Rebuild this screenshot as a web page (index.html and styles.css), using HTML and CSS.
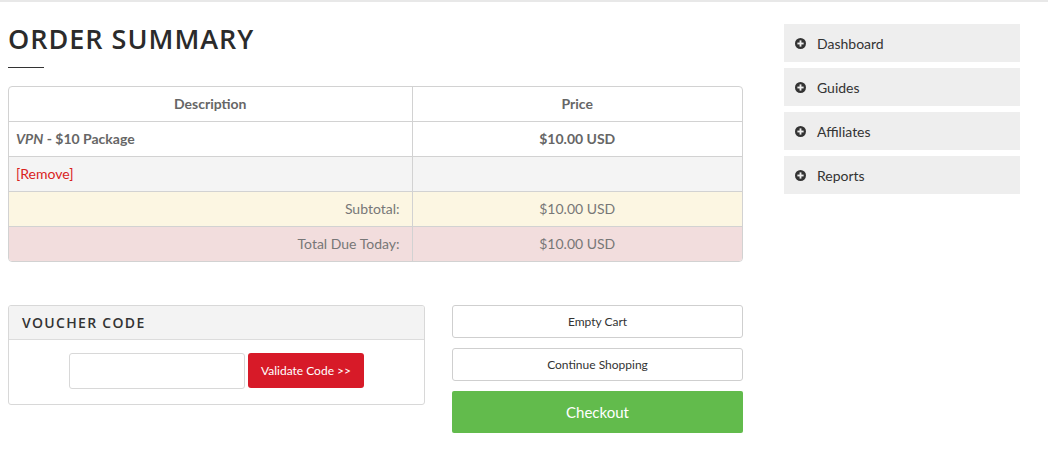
FILE: index.html
```html
<!DOCTYPE html>
<html>
<head>
<meta charset="utf-8">
<link rel="stylesheet" href="styles.css">
</head>
<body>
<div class="page">
  <main class="main">
    <h1 class="title">ORDER SUMMARY</h1>
    <div class="title-rule"></div>
    <div class="table-wrap">
      <table class="cart">
        <thead>
          <tr><th class="c-desc">Description</th><th class="c-price">Price</th></tr>
        </thead>
        <tbody>
          <tr class="r-item"><td><em>VPN</em> - $10 Package</td><td class="center">$10.00 USD</td></tr>
          <tr class="r-remove"><td><a class="remove" href="#">[Remove]</a></td><td></td></tr>
          <tr class="r-sub"><td class="right">Subtotal:</td><td class="center">$10.00 USD</td></tr>
          <tr class="r-total"><td class="right">Total Due Today:</td><td class="center">$10.00 USD</td></tr>
        </tbody>
      </table>
    </div>
    <div class="lower">
      <section class="voucher">
        <div class="voucher-head">VOUCHER CODE</div>
        <div class="voucher-body">
          <input class="voucher-input" type="text">
          <button class="btn-validate">Validate Code &gt;&gt;</button>
        </div>
      </section>
      <div class="actions">
        <button class="btn-plain">Empty Cart</button>
        <button class="btn-plain">Continue Shopping</button>
        <button class="btn-checkout">Checkout</button>
      </div>
    </div>
  </main>
  <aside class="side">
    <a class="side-item" href="#"><svg class="ic" viewBox="0 0 12 12"><circle cx="6" cy="6" r="6" fill="#333"/><rect x="2.6" y="5" width="6.8" height="2" fill="#eee"/><rect x="5" y="2.6" width="2" height="6.8" fill="#eee"/></svg>Dashboard</a>
    <a class="side-item" href="#"><svg class="ic" viewBox="0 0 12 12"><circle cx="6" cy="6" r="6" fill="#333"/><rect x="2.6" y="5" width="6.8" height="2" fill="#eee"/><rect x="5" y="2.6" width="2" height="6.8" fill="#eee"/></svg>Guides</a>
    <a class="side-item" href="#"><svg class="ic" viewBox="0 0 12 12"><circle cx="6" cy="6" r="6" fill="#333"/><rect x="2.6" y="5" width="6.8" height="2" fill="#eee"/><rect x="5" y="2.6" width="2" height="6.8" fill="#eee"/></svg>Affiliates</a>
    <a class="side-item" href="#"><svg class="ic" viewBox="0 0 12 12"><circle cx="6" cy="6" r="6" fill="#333"/><rect x="2.6" y="5" width="6.8" height="2" fill="#eee"/><rect x="5" y="2.6" width="2" height="6.8" fill="#eee"/></svg>Reports</a>
  </aside>
</div>
</body>
</html>
```
FILE: styles.css
```css
* { box-sizing: border-box; }
html, body { margin: 0; padding: 0; background: #fff; }
body {
  font-family: Lato, "Open Sans", Arial, sans-serif;
  font-size: 14px;
  color: #555;
  border-top: 2px solid #e8e8e8;
}
.page {
  display: flex;
  gap: 41px;
  padding: 0 28px 0 8px;
}
.main { width: 735px; flex: none; }
.title {
  margin: 21px 0 0;
  font-family: "Open Sans", Lato, sans-serif;
  font-weight: 600;
  font-size: 27px;
  line-height: 32px;
  letter-spacing: 1px;
  color: #2b2b2b;
}
.title-rule {
  width: 36px;
  height: 1px;
  background: #333;
  margin-top: 12px;
  margin-bottom: 18px;
}
.table-wrap {
  border: 1px solid #d2d2d2;
  border-radius: 4px;
  overflow: hidden;
}
.cart {
  width: 100%;
  border-collapse: collapse;
  table-layout: fixed;
}
.cart th, .cart td {
  height: 35px;
  padding: 0 7px;
  border-top: 1px solid #d2d2d2;
  border-left: 1px solid #d2d2d2;
  vertical-align: middle;
}
.cart tr > :first-child { border-left: none; }
.cart thead th { border-top: none; height: 34px; font-weight: 700; color: #666; text-align: center; }
.c-desc { width: 403px; }
.r-item td { font-weight: 700; color: #666; background: #fff; }
.r-item em { font-style: italic; }
.r-remove td { background: #f4f4f4; }
.r-sub td { background: #fcf6e2; color: #777; }
.r-total td { background: #f2dddd; color: #777; }
.right { text-align: right; padding-right: 12px !important; }
.center { text-align: center; }
.remove { color: #d9221c; text-decoration: none; }

.lower {
  display: flex;
  gap: 27px;
  margin-top: 43px;
  align-items: flex-start;
}
.voucher {
  width: 417px;
  border: 1px solid #d8d8d8;
  border-radius: 3px;
  overflow: hidden;
}
.voucher-head {
  background: #f3f3f3;
  border-bottom: 1px solid #dcdcdc;
  height: 34px;
  line-height: 34px;
  padding-left: 13px;
  font-family: "Open Sans", Lato, sans-serif;
  font-weight: 600;
  font-size: 14px;
  letter-spacing: 1.3px;
  color: #333;
}
.voucher-body {
  display: flex;
  justify-content: center;
  gap: 3px;
  padding: 13px 0 15px;
}
.voucher-input {
  width: 176px;
  height: 36px;
  border: 1px solid #d8d8d8;
  border-radius: 3px;
  margin: 0;
}
.btn-validate {
  width: 116px;
  height: 35px;
  background: #d71a28;
  color: #fff;
  border: none;
  border-radius: 3px;
  font-family: Lato, sans-serif;
  font-size: 12px;
}
.actions {
  width: 291px;
  display: flex;
  flex-direction: column;
  gap: 10px;
}
.btn-plain {
  height: 33px;
  background: #fff;
  border: 1px solid #cfcfcf;
  border-radius: 3px;
  font-family: Lato, sans-serif;
  font-size: 12px;
  color: #333;
}
.btn-checkout {
  height: 42px;
  background: #62bb4c;
  border: none;
  border-radius: 2px;
  color: #fff;
  font-family: Lato, sans-serif;
  font-size: 15px;
}
.side {
  width: 236px;
  flex: none;
  margin-top: 22px;
  display: flex;
  flex-direction: column;
  gap: 6px;
}
.side-item {
  display: flex;
  align-items: center;
  height: 38px;
  background: #eee;
  padding-left: 11px;
  color: #333;
  text-decoration: none;
  font-size: 14px;
}
.ic { width: 11px; height: 11px; margin-right: 11px; }
```
